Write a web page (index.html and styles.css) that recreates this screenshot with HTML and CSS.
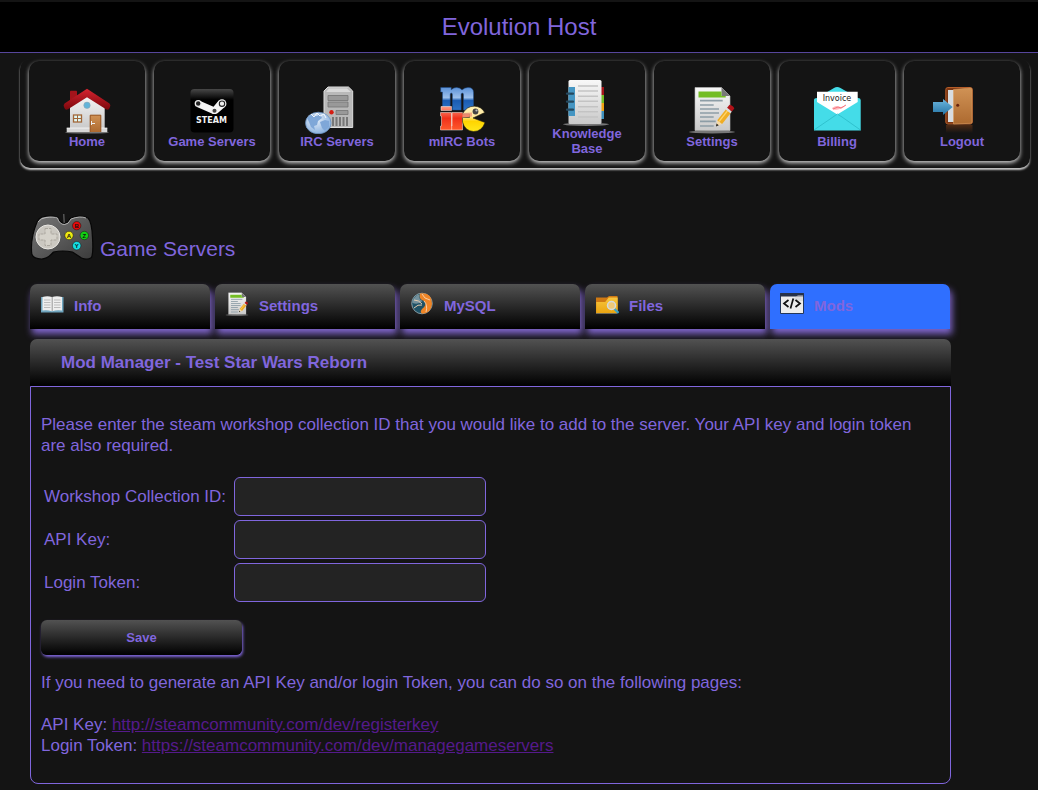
FILE: index.html
```html
<!DOCTYPE html>
<html lang="en">
<head>
<meta charset="utf-8">
<title>Evolution Host</title>
<link rel="stylesheet" href="styles.css">
</head>
<body>
<svg class="defs" aria-hidden="true">
  <defs>
    <linearGradient id="roof" x1="0" y1="0" x2="0" y2="1"><stop offset="0" stop-color="#d62430"/><stop offset="1" stop-color="#7c070c"/></linearGradient>
    <linearGradient id="paper" x1="0" y1="0" x2="0" y2="1"><stop offset="0" stop-color="#f8f8f8"/><stop offset="1" stop-color="#c9c9c9"/></linearGradient>
    <linearGradient id="wood" x1="0" y1="0" x2="0" y2="1"><stop offset="0" stop-color="#d09255"/><stop offset="1" stop-color="#ad6a30"/></linearGradient>
    <linearGradient id="gloss" x1="0" y1="0" x2="0" y2="1"><stop offset="0" stop-color="#484848"/><stop offset=".25" stop-color="#000"/></linearGradient>
    <linearGradient id="blue" x1="0" y1="0" x2="0" y2="1"><stop offset="0" stop-color="#5c92d8"/><stop offset=".45" stop-color="#9cc0ec"/><stop offset=".58" stop-color="#1a5cb2"/><stop offset="1" stop-color="#2d72c4"/></linearGradient>
    <linearGradient id="red" x1="0" y1="0" x2="0" y2="1"><stop offset="0" stop-color="#ff9d84"/><stop offset=".5" stop-color="#f0301a"/><stop offset="1" stop-color="#ff5a2c"/></linearGradient>
    <linearGradient id="pac" x1="0" y1="0" x2="0" y2="1"><stop offset="0" stop-color="#fff0b4"/><stop offset=".4" stop-color="#ffe9a0"/><stop offset=".6" stop-color="#ffd400"/><stop offset="1" stop-color="#ffe81c"/></linearGradient>
    <linearGradient id="arrow" x1="0" y1="0" x2="0" y2="1"><stop offset="0" stop-color="#6cb6de"/><stop offset="1" stop-color="#2675a6"/></linearGradient>
    <linearGradient id="reflect" x1="0" y1="0" x2="0" y2="1"><stop offset="0" stop-color="#4c2914"/><stop offset="1" stop-color="#141414"/></linearGradient>
    <linearGradient id="folder" x1="0" y1="0" x2="0" y2="1"><stop offset="0" stop-color="#f8c73e"/><stop offset="1" stop-color="#eaa512"/></linearGradient>
    <linearGradient id="pad" x1="0" y1="0" x2="1" y2="1"><stop offset="0" stop-color="#777"/><stop offset="1" stop-color="#3b3b3b"/></linearGradient>
    <radialGradient id="globe" cx=".4" cy=".35" r=".7"><stop offset="0" stop-color="#e6effa"/><stop offset="1" stop-color="#86aedd"/></radialGradient>
    <symbol id="note" viewBox="0 0 48 48">
      <ellipse cx="24" cy="46" rx="23" ry="1.500" fill="#777"/>
      <path d="M7 1.500h26.500l8.500 8.500v34.500H7z" fill="url(#paper)" stroke="#bbb" stroke-width=".6"/>
      <path d="M33.500 1.500l8.500 8.500h-8.500z" fill="#777"/>
      <path d="M10.500 5.500h23v4.500h4.200v1.500H10.500z" fill="#74bd24"/>
      <path d="M12 14.700h22.700M12 19h13.700M12 23h19M12 27h19M12 31h13.700M12 35.300h15.700M12 40h13.700" stroke="#8d9da6" stroke-width="1.700"/>
      <path d="M28 40.500l1.300-6.300 4.800 3.800z" fill="#f5d9a8"/>
      <path d="M28 40.500l.5-3 2.300 1.700z" fill="#222"/>
      <path d="M29.300 34.200l8.500-10.700 4.800 3.700-8.500 10.800z" fill="#f0ad22"/>
      <path d="M31 35.500l8.500-10.700" stroke="#ffd56b" stroke-width="1.300"/>
      <path d="M37.800 23.500l1.300-1.700 4.800 3.700-1.300 1.700z" fill="#ddd"/>
      <path d="M39.100 21.800l2.400-3q3.500.5 4.800 3.700l-2.400 3z" fill="#b01218"/>
    </symbol>
  </defs>
</svg>

<header class="banner"><h1 class="banner-title">Evolution Host</h1></header>

<nav class="main-nav">
  <a class="nav-item" href="#">
    <svg width="48" height="48" viewBox="0 0 48 48" aria-hidden="true">
      <ellipse cx="24" cy="46.500" rx="22" ry="1.300" fill="#555"/>
      <path d="M7 5.500q0-.7.700-.7h5.600q.7 0 .7.700V15H7z" fill="#a3141b"/>
      <path d="M7 20L24 7l17.700 13v23H7z" fill="url(#paper)"/>
      <path d="M3.700 42h40.600v4.300H3.700z" fill="#d7d7d7"/><path d="M3.700 42h40.600" stroke="#fff" stroke-width=".7"/>
      <path d="M24 2.700L1.500 17.500q-1.500 1.500-.5 3.500l1 2q1 1.300 3 .3L24 11.300l19 12q2 1 3-.3l1-2q1-2-.5-3.500z" fill="url(#roof)"/>
      <circle cx="24" cy="19.300" r="3.200" fill="#62b4d9" stroke="#8fa7b3" stroke-width=".6"/>
      <rect x="10.500" y="29" width="8" height="7" fill="#dff7f4" stroke="#a26738" stroke-width="1.300"/><path d="M14.500 29v7M10.500 32.500h8" stroke="#a26738"/>
      <path d="M27.200 46V29.200h10.600V46" fill="url(#wood)" stroke="#95501b"/><path d="M28.500 35v4M28.500 37.500h3.500" stroke="#eee" stroke-width="1"/>
    </svg>
    <span>Home</span>
  </a>
  <a class="nav-item" href="#">
    <svg width="48" height="48" viewBox="0 0 48 48" aria-hidden="true">
      <rect x="2.500" y="3" width="43" height="43.500" rx="4" fill="url(#gloss)"/>
      <path d="M10.500 14.300l15 6.500 5-6 6.500 6-7.500 6.500-5 .5L9 21z" fill="#f5f5f5"/>
      <circle cx="10.200" cy="17.500" r="2.900" fill="#222" stroke="#eee" stroke-width="1.300"/>
      <circle cx="26.500" cy="24.700" r="2.700" fill="#444" stroke="#f5f5f5" stroke-width="1.300"/>
      <circle cx="34" cy="17.700" r="4.400" fill="#f5f5f5"/><circle cx="34" cy="17.700" r="2.700" fill="#eee" stroke="#222" stroke-width="1.100"/>
      <text class="steam-word" x="23.500" y="37">STEAM</text>
    </svg>
    <span>Game Servers</span>
  </a>
  <a class="nav-item" href="#">
    <svg width="64" height="48" viewBox="0 0 64 48" aria-hidden="true">
      <path d="M19 41.500V5l4-4h20.500l4.200 4v36.500z" fill="#b9b9b9" stroke="#dedede"/>
      <path d="M21 6l3-3.500h18l4 3.500z" fill="#d9d9d9"/>
      <path d="M23 9.500h20v5H23zM23 16h20v5H23zM31 24.500h12v4H31z" fill="#999" stroke="#737373" stroke-width=".8"/>
      <circle cx="26.500" cy="26.300" r="2.200" fill="#d51d12"/>
      <path d="M28 31v9M31.500 31v9M35 31v9M38.500 31v9M42 31v9" stroke="#777" stroke-width="2"/>
      <ellipse cx="13.300" cy="37" rx="12.800" ry="10.800" fill="url(#globe)" stroke="#648cbc" stroke-width=".7"/>
      <path d="M2 32l4-3 6 1 3-2 2 4-4 3-1 4-3 1 1 4-4-3-2-5zM15 36l5-2 4 1v6l-4 4-3-3z" fill="#7fa7d8"/>
      <path d="M6 28l3 3 3-4 3 3 4-2 2 4" fill="none" stroke="#fff" stroke-width=".9"/>
    </svg>
    <span>IRC Servers</span>
  </a>
  <a class="nav-item" href="#">
    <svg width="48" height="48" viewBox="0 0 48 48" aria-hidden="true">
      <path d="M2.700 1.500h10.500v2.300q2.500-2.300 5.500-2.300 3.500 0 5.300 2.500 2.300-2.500 6-2.500 5.500 0 5.500 5V24h-10V8.500q0-1.500-1.200-1.500t-1.200 1.500V24h-8.700V8.500q0-1.500-1.100-1.500t-1.100 1.500V21H4.500V6H2.700z" fill="url(#blue)" stroke="#1c4f91" stroke-width=".5"/>
      <path d="M3 20.500h10.500v4H3zM2.500 26.500h11V40H14V26.500h10l3 1.500 6-.5v4H24.500V44H2.500v-4h1V30h-1z" fill="url(#red)" stroke="#fff0e8" stroke-width=".5"/>
      <path d="M13.700 27v17" stroke="#ffd7ca" stroke-width=".7"/>
      <path d="M24.500 28q4-8 12-7.800 7 .3 10.200 6.300L35 32l12 4.500Q44 45.500 35.500 45.500 27 45 24.500 36v-4.500h7v-3.500z" fill="url(#pac)" stroke="#2c2711" stroke-width=".6"/>
      <path d="M24.500 27l9.500-.5v4l-9.500 1" fill="#f09a7c" opacity=".8"/>
      <circle cx="37.500" cy="25.500" r="2.900" fill="#444"/><circle cx="38.500" cy="24.500" r="1.100" fill="#bbb"/>
    </svg>
    <span>mIRC Bots</span>
  </a>
  <a class="nav-item" href="#">
    <svg width="48" height="48" viewBox="0 0 48 48" aria-hidden="true">
      <ellipse cx="23" cy="46.300" rx="23" ry="1.600" fill="#777"/>
      <path d="M37 9h4v8h-4z" fill="#a31419"/><path d="M37 17h4v8h-4z" fill="#74bd24"/><path d="M37 25h4v8h-4z" fill="#f0a211"/><path d="M37 33h4v8h-4z" fill="#3f91bd"/>
      <rect x="5.500" y="2" width="33" height="44" rx="1.500" fill="url(#paper)"/>
      <path d="M5.500 9H12v29H5.500z" fill="#4596c3"/>
      <path d="M15 8h20M15 13h20M15 18.300h20M15 23.300h20M15 28.700h20M15 33.700h20M15 39h20" stroke="#c3c3c3" stroke-width="1.500"/>
      <path d="M4 15.700h6M4 23.700h6M4 31.700h6" stroke="#25495f" stroke-width="2.300" stroke-linecap="round"/>
    </svg>
    <span>Knowledge<br>Base</span>
  </a>
  <a class="nav-item" href="#">
    <svg width="48" height="48" aria-hidden="true"><use href="#note"/></svg>
    <span>Settings</span>
  </a>
  <a class="nav-item" href="#">
    <svg width="48" height="48" viewBox="0 0 48 48" aria-hidden="true">
      <path d="M1 14q0-2 3-2L21 2q3-2 6.500 0L45 12q2.700 0 2.700 2v30.500H1z" fill="#44dce8"/>
      <path d="M4 5.700h40.700V16L24.300 28.500 4 16z" fill="#fff"/>
      <path d="M1 44L20 31l4.300-3L29 31l18.500 13" fill="none" stroke="#27b6c3" stroke-width=".7"/>
      <text class="invoice-word" x="24" y="14.500">Invoice</text>
      <path d="M19 22q4-3 7-1.500t7-2q-2 4-8 5t-6-1.500z" fill="#ffb9bd"/><path d="M20 23l5-2 3 1 5-3" fill="none" stroke="#f3636e" stroke-width=".8"/>
    </svg>
    <span>Billing</span>
  </a>
  <a class="nav-item" href="#">
    <svg width="58" height="48" viewBox="0 0 58 48" aria-hidden="true">
      <path d="M13 39h26.500v8H13z" fill="url(#reflect)"/>
      <rect x="12.800" y="1.500" width="26.500" height="36.500" rx="2" fill="#7d3713" stroke="#b55c28"/>
      <path d="M15 4h7v32h-7z" fill="#d8dce0"/>
      <path d="M20.500 3.500L37.500 2q1.500 0 1.500 1.500V36q0 1.300-1.500 1.300l-17 .7z" fill="url(#wood)" stroke="#d99e61" stroke-width=".6"/>
      <circle cx="24.700" cy="19.300" r="1.500" fill="#67230d"/>
      <path d="M0 16h10v-3l9.700 8-9.700 8v-3H0z" fill="url(#arrow)"/>
    </svg>
    <span>Logout</span>
  </a>
</nav>

<main class="content">
  <h2 class="page-title">
    <svg width="64" height="50" viewBox="0 0 64 50" aria-hidden="true">
      <path d="M33.700 3l.6 10" stroke="#555" stroke-width="1.500"/>
      <path d="M12 6q10-2.500 16 .5 2 6 6 6t6-5q10-4.500 18-.5 4 4 4.500 20 1 15-1 19.500-4 3-10 .5l-9-6q-10-2-19 0-6 7-12 7-8 0-9.700-5Q0 28 7 11q2-4 5-5z" fill="url(#pad)" stroke="#070707" stroke-width="1.200"/>
      <path d="M8 11q3-4 8-4.500 8-1 11.500.5 2 6.500 7 6.500 4 0 6.500-5.500 9-3.500 15-1" fill="none" stroke="#ccc" stroke-width=".8"/>
      <circle cx="18" cy="26" r="12" fill="#cbc8c1" stroke="#e9e7e3"/>
      <path d="M15 17.500h6v5.500h6v6h-6v5.500h-6V29H9v-6h6z" fill="#d5d2ca" stroke="#aaa69e" stroke-dasharray="3 1"/>
      <g stroke="#111" stroke-width=".5"><circle cx="46.700" cy="14.700" r="4.200" fill="#e90909"/><circle cx="39" cy="24.500" r="4.200" fill="#efea12"/><circle cx="54.300" cy="24.500" r="4.200" fill="#13cf13"/><circle cx="46.700" cy="34.700" r="4.200" fill="#13dfe5"/></g>
      <g class="pad-letter"><text x="46.700" y="17">B</text><text x="39" y="27">A</text><text x="54.300" y="27">Z</text><text x="46.700" y="37">Y</text></g>
    </svg>
    <span>Game Servers</span>
  </h2>

  <nav class="tabs">
    <a class="tab" href="#">
      <svg width="24" height="24" viewBox="0 0 24 24" aria-hidden="true">
        <path d="M1 5h22.500v15.500H1z" fill="#6fa5be"/><path d="M2.500 5q5-1.300 9.500 0 5-1.300 10 0v13.500q-5-1-10 .7-5-1.700-9.500-.7z" fill="#eee"/>
        <path d="M12.200 5v14" stroke="#999" stroke-width="1"/><path d="M4 8h6.500M4 10.500h6.500M4 13h6.500M4 15.500h6.500M14 8h6.500M14 10.500h6.500M14 13h6.500M14 15.500h6.500" stroke="#bbb"/>
      </svg><span>Info</span></a>
    <a class="tab" href="#"><svg width="24" height="24" aria-hidden="true"><use href="#note"/></svg><span>Settings</span></a>
    <a class="tab" href="#">
      <svg width="24" height="24" viewBox="0 0 24 24" aria-hidden="true">
        <circle cx="12" cy="11.500" r="10.300" fill="#1f5266" stroke="#9cb4bd" stroke-width=".8"/>
        <path d="M10 1.500Q22 0 22 12q-1 9-9 9.700-4-.7-1-4.700 6-5 2-8-6-2-4-7.500z" fill="#ef8527"/>
        <path d="M2.500 9Q5 3 9.500 2.500q-1 5 3 6.500-4 4-10 2z" fill="#74919c"/><path d="M12 2q2 5 8 6M14 9q4 4 2 11M4 8q5 0 8 4M4 16q4-4 8-3" fill="none" stroke="#f7d6b4" stroke-width=".9"/>
      </svg><span>MySQL</span></a>
    <a class="tab" href="#">
      <svg width="24" height="24" viewBox="0 0 24 24" aria-hidden="true">
        <path d="M1 5.500h11l2-1.500h8.500v17H1z" fill="#cf7913"/><path d="M1.200 10h9l3.500-4.500h9V21H1.200z" fill="url(#folder)"/><path d="M1 21.500h21" stroke="#9c916f" stroke-width=".7"/>
        <path d="M19.500 17l4 4" stroke="#3aa0c8" stroke-width="2.300"/><circle cx="16.500" cy="13.500" r="4" fill="#efc978" stroke="#d4dadd" stroke-width="1.500"/>
      </svg><span>Files</span></a>
    <a class="tab tab-active" href="#">
      <svg width="24" height="24" viewBox="0 0 24 24" aria-hidden="true">
        <path d="M.5 1.500h23v20H.5z" fill="#ededed" stroke="#24375a"/><path d="M.2 1h23.600v3.500H.2z" fill="#263149"/><path d="M11 9l7-6h5v6z" fill="#ccc" opacity=".5"/>
        <path d="M8.500 8L4 11.500 8.500 15M15.500 8l4.500 3.500-4.500 3.500M13.300 6.500l-2.800 10" fill="none" stroke="#111" stroke-width="1.700"/>
      </svg><span>Mods</span></a>
  </nav>

  <section class="panel">
    <h3 class="panel-title">Mod Manager - Test Star Wars Reborn</h3>
    <div class="panel-body">
      <p class="copy">Please enter the steam workshop collection ID that you would like to add to the server. Your API key and login token are also required.</p>
      <form class="mod-form">
        <div class="fields">
          <label for="collection">Workshop Collection ID:</label><input class="field" id="collection" type="text">
          <label for="apikey">API Key:</label><input class="field" id="apikey" type="text">
          <label for="token">Login Token:</label><input class="field" id="token" type="text">
        </div>
        <button class="save" type="button">Save</button>
      </form>
      <p class="copy">If you need to generate an API Key and/or login Token, you can do so on the following pages:</p>
      <p class="copy links">API Key: <a class="link" href="http://steamcommunity.com/dev/registerkey">http://steamcommunity.com/dev/registerkey</a><br>Login Token: <a class="link" href="https://steamcommunity.com/dev/managegameservers">https://steamcommunity.com/dev/managegameservers</a></p>
    </div>
  </section>
</main>
</body>
</html>
```
FILE: styles.css
```css
* { box-sizing: border-box; }

body {
  margin: 0;
  padding-top: 2px;
  background: #141414;
  color: #8066dd;
  font: 17px/21px "Liberation Sans", Arial, sans-serif;
}

h1, h2, h3, p { margin: 0; font-weight: normal; }
svg { display: block; flex: none; }
.defs { position: absolute; width: 0; height: 0; }

.banner {
  background: #000;
  border-bottom: 1px solid #57469c;
  text-align: center;
}
.banner-title { font-size: 24px; line-height: 50px; }

.main-nav {
  display: flex;
  gap: 9px;
  margin: 6px 8px 0 20px;
  padding: 2px 10px 7px 9px;
  border-radius: 10px;
  box-shadow: 0 2px 2px #c4c4c4;
  background: #141414;
}
.nav-item {
  flex: 1 1 0;
  display: flex;
  flex-direction: column;
  align-items: center;
  justify-content: center;
  min-height: 100px;
  padding-top: 12px;
  border-radius: 10px;
  background: #141414;
  box-shadow: 0 2px 4px #d0d0d0;
  color: inherit;
  font-size: 13px;
  font-weight: bold;
  line-height: 15px;
  text-align: center;
  text-decoration: none;
}
.steam-word { font: bold 8px "DejaVu Sans", sans-serif; fill: #f2f2f2; text-anchor: middle; }
.invoice-word { font: 8px "DejaVu Sans", sans-serif; fill: #222; text-anchor: middle; }
.pad-letter { font: bold 6px "Liberation Sans", sans-serif; fill: #111; text-anchor: middle; }

.content { max-width: 951px; padding: 43px 0 6px 30px; }
.page-title {
  display: flex;
  align-items: flex-end;
  gap: 6px;
  font-size: 21px;
  line-height: 25px;
}

.tabs { display: flex; gap: 5px; margin: 23px 1px 10px 0; }
.tab {
  flex: 1 1 0;
  display: flex;
  align-items: center;
  gap: 10px;
  height: 45px;
  padding: 0 0 2px 10px;
  border-radius: 7px 7px 0 0;
  background: linear-gradient(#525252, #000);
  box-shadow: 2px 5px 7px #8066cc;
  color: inherit;
  font-size: 15px;
  font-weight: bold;
  text-decoration: none;
}
.tab svg { margin-bottom: 3px; }
.tab-active { background: #2f6fff; }

.panel { position: relative; }
.panel-title {
  padding-left: 31px;
  border-radius: 7px 7px 0 0;
  background: linear-gradient(#525252, #000);
  font-size: 17px;
  font-weight: bold;
  line-height: 47px;
}
.panel-body {
  padding: 27px 10px;
  border: 1px solid #8066dd;
  border-radius: 0 0 8px 8px;
}

.fields {
  display: grid;
  grid-template-columns: 186px minmax(0, 252px);
  gap: 4px;
  align-items: center;
  padding: 21px 3px 18px;
}
.field {
  width: 100%;
  height: 39px;
  padding: 0 8px;
  border: 1px solid #8066dd;
  border-radius: 6px;
  background: #232323;
  color: inherit;
  font: inherit;
}
.save {
  display: block;
  width: 201px;
  height: 35px;
  margin-bottom: 17px;
  border: 0;
  border-radius: 6px;
  background: linear-gradient(#525252, #000);
  box-shadow: 1px 2px 3px #8066dd;
  color: inherit;
  font: bold 13px "Liberation Sans", Arial, sans-serif;
}
.links { margin-top: 21px; }
.link { color: #551a8b; }
```
